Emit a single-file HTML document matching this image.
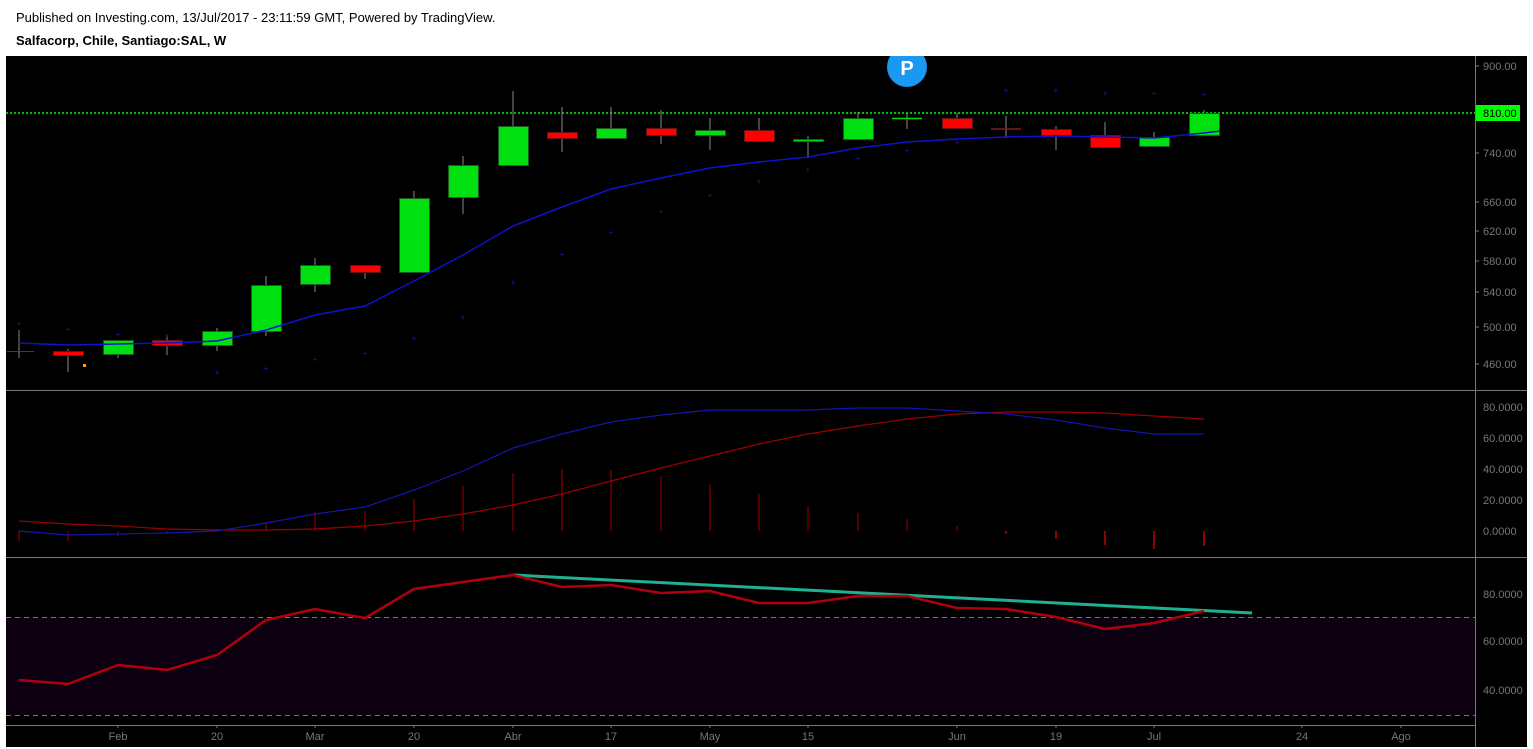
<!DOCTYPE html>
<html><head><meta charset="utf-8"><style>
html,body{margin:0;padding:0;background:#fff;width:1533px;height:749px;overflow:hidden;font-family:"Liberation Sans",Arial,sans-serif}
.h1{position:absolute;left:16px;top:10px;font-size:13px;color:#000}
.h2{position:absolute;left:16px;top:33px;font-size:13px;font-weight:bold;color:#000}
svg{position:absolute;left:0;top:0}
</style></head><body>
<div class="h1">Published on Investing.com, 13/Jul/2017 - 23:11:59 GMT, Powered by TradingView.</div>
<div class="h2">Salfacorp, Chile, Santiago:SAL, W</div>
<svg width="1533" height="749" font-family="Liberation Sans, Arial, sans-serif">
<defs><clipPath id="c"><rect x="6" y="56" width="1521" height="691"/></clipPath></defs>
<rect x="6" y="56" width="1521" height="691" fill="#000"/>
<rect x="6" y="617" width="1469" height="98" fill="#0d0010"/>
<g stroke="#777" stroke-width="1">
<line x1="1475.5" y1="56" x2="1475.5" y2="747"/>
<line x1="6" y1="390.5" x2="1527" y2="390.5"/>
<line x1="6" y1="557.5" x2="1527" y2="557.5"/>
<line x1="6" y1="725.5" x2="1475" y2="725.5"/>
<line x1="6" y1="617.5" x2="1475" y2="617.5" stroke-dasharray="5,4"/>
<line x1="6" y1="715.5" x2="1475" y2="715.5" stroke-dasharray="5,4"/>
</g>
<line x1="6" y1="113" x2="1475" y2="113" stroke="#00ff00" stroke-width="1.5" stroke-dasharray="2,2"/>
<g fill="#777" font-size="11">
<text x="1483" y="70">900.00</text><text x="1483" y="157">740.00</text><text x="1483" y="206">660.00</text><text x="1483" y="235">620.00</text><text x="1483" y="265">580.00</text><text x="1483" y="296">540.00</text><text x="1483" y="331">500.00</text><text x="1483" y="368">460.00</text>
<text x="1483" y="411">80.0000</text><text x="1483" y="442">60.0000</text><text x="1483" y="473">40.0000</text><text x="1483" y="504">20.0000</text><text x="1483" y="535">0.0000</text>
<text x="1483" y="598">80.0000</text><text x="1483" y="645">60.0000</text><text x="1483" y="694">40.0000</text>
</g>
<g stroke="#777"><line x1="1475" y1="66" x2="1479" y2="66"/><line x1="1475" y1="153" x2="1479" y2="153"/><line x1="1475" y1="202" x2="1479" y2="202"/><line x1="1475" y1="231" x2="1479" y2="231"/><line x1="1475" y1="261" x2="1479" y2="261"/><line x1="1475" y1="292" x2="1479" y2="292"/><line x1="1475" y1="327" x2="1479" y2="327"/><line x1="1475" y1="364" x2="1479" y2="364"/></g>
<rect x="1476" y="105" width="44" height="16" fill="#0f0"/>
<text x="1483" y="117" font-size="11" fill="#000">810.00</text>
<g fill="#777" font-size="11" text-anchor="middle">
<text x="118" y="740">Feb</text><text x="217" y="740">20</text><text x="315" y="740">Mar</text><text x="414" y="740">20</text><text x="513" y="740">Abr</text><text x="611" y="740">17</text><text x="710" y="740">May</text><text x="808" y="740">15</text><text x="957" y="740">Jun</text><text x="1056" y="740">19</text><text x="1154" y="740">Jul</text><text x="1302" y="740">24</text><text x="1401" y="740">Ago</text>
</g>
<g clip-path="url(#c)">
<circle cx="907" cy="67" r="20" fill="#1a98f2"/>
<text x="907" y="75" font-size="20" font-weight="bold" fill="#fff" text-anchor="middle">P</text>
</g>
<g stroke="#888" stroke-width="1">
<line x1="19" y1="330" x2="19" y2="358"/><line x1="68" y1="349" x2="68" y2="372"/><line x1="118" y1="355" x2="118" y2="358"/><line x1="167" y1="336" x2="167" y2="355"/><line x1="217" y1="328" x2="217" y2="351"/><line x1="266" y1="276" x2="266" y2="336"/><line x1="315" y1="258" x2="315" y2="292"/><line x1="365" y1="265" x2="365" y2="279"/><line x1="414" y1="191" x2="414" y2="272"/><line x1="463" y1="156" x2="463" y2="214"/><line x1="513" y1="91" x2="513" y2="165"/><line x1="562" y1="107" x2="562" y2="152"/><line x1="611" y1="107" x2="611" y2="138"/><line x1="661" y1="110" x2="661" y2="144"/><line x1="710" y1="118" x2="710" y2="150"/><line x1="759" y1="118" x2="759" y2="141"/><line x1="808" y1="136" x2="808" y2="158"/><line x1="858" y1="112" x2="858" y2="139"/><line x1="907" y1="113" x2="907" y2="129"/><line x1="957" y1="113" x2="957" y2="128"/><line x1="1006" y1="116" x2="1006" y2="138"/><line x1="1056" y1="126" x2="1056" y2="150"/><line x1="1105" y1="122" x2="1105" y2="148"/><line x1="1154" y1="132" x2="1154" y2="146"/><line x1="1204" y1="110" x2="1204" y2="135"/>
</g>
<line x1="7" y1="351.5" x2="34" y2="351.5" stroke="#c00"/>
<g fill="#00e010" stroke="#1a5a1a" stroke-width="1">
<rect x="103.5" y="340.5" width="30" height="14"/><rect x="202.5" y="331.5" width="30" height="14"/><rect x="251.5" y="285.5" width="30" height="46"/><rect x="300.5" y="265.5" width="30" height="19"/><rect x="399.5" y="198.5" width="30" height="74"/><rect x="448.5" y="165.5" width="30" height="32"/><rect x="498.5" y="126.5" width="30" height="39"/><rect x="596.5" y="128.5" width="30" height="10"/><rect x="695.5" y="130.5" width="30" height="5"/><rect x="793.5" y="139.5" width="30" height="2"/><rect x="843.5" y="118.5" width="30" height="21"/><rect x="1139.5" y="137.5" width="30" height="9"/><rect x="1189.5" y="113.5" width="30" height="22"/>
</g>
<line x1="892" y1="118.5" x2="922" y2="118.5" stroke="#0d0" stroke-width="1.5"/>
<g fill="#f00" stroke="#6a1010" stroke-width="1">
<rect x="53.5" y="351.5" width="30" height="4"/><rect x="152.5" y="340.5" width="30" height="5"/><rect x="350.5" y="265.5" width="30" height="7"/><rect x="547.5" y="132.5" width="30" height="6"/><rect x="646.5" y="128.5" width="30" height="7"/><rect x="744.5" y="130.5" width="30" height="11"/><rect x="942.5" y="118.5" width="30" height="10"/><rect x="1041.5" y="129.5" width="30" height="6"/><rect x="1090.5" y="135.5" width="30" height="12"/>
</g>
<line x1="991" y1="129" x2="1021" y2="129" stroke="#7a2020" stroke-width="1.5"/>
<rect x="83" y="364" width="3" height="3" fill="#f90"/>
<polyline fill="none" stroke="#1010d0" stroke-width="1.5" points="19,343 68,345 167,343 217,341 266,330 315,315 365,306 414,281 463,255 513,226 562,207 611,189 661,178 710,168 759,162 808,157 858,148 907,142 957,139 1006,137 1056,136 1105,137 1154,138 1204,133 1220,131"/>
<g fill="#1818c0" font-size="8" text-anchor="middle">
<text x="19" y="326">+</text><text x="68" y="332">+</text><text x="118" y="337">+</text><text x="167" y="338">+</text><text x="217" y="375">+</text><text x="266" y="371">+</text><text x="315" y="362">+</text><text x="365" y="356">+</text><text x="414" y="341">+</text><text x="463" y="320">+</text><text x="513" y="285">+</text><text x="562" y="257">+</text><text x="611" y="235">+</text><text x="661" y="214">+</text><text x="710" y="198">+</text><text x="759" y="184">+</text><text x="808" y="172">+</text><text x="858" y="161">+</text><text x="907" y="153">+</text><text x="957" y="145">+</text><text x="1006" y="93">+</text><text x="1056" y="93">+</text><text x="1105" y="96">+</text><text x="1154" y="96">+</text><text x="1204" y="97">+</text>
</g>
<g stroke="#a00000" stroke-width="1">
<line x1="19" y1="531" x2="19" y2="541"/><line x1="68" y1="531" x2="68" y2="541"/><line x1="118" y1="531" x2="118" y2="536"/><line x1="167" y1="531" x2="167" y2="534"/><line x1="217" y1="531" x2="217" y2="529"/><line x1="266" y1="531" x2="266" y2="522"/><line x1="315" y1="531" x2="315" y2="512"/><line x1="365" y1="531" x2="365" y2="511"/><line x1="414" y1="531" x2="414" y2="499"/><line x1="463" y1="531" x2="463" y2="486"/><line x1="513" y1="531" x2="513" y2="473"/><line x1="562" y1="531" x2="562" y2="469"/><line x1="611" y1="531" x2="611" y2="470"/><line x1="661" y1="531" x2="661" y2="476"/><line x1="710" y1="531" x2="710" y2="484"/><line x1="759" y1="531" x2="759" y2="494"/><line x1="808" y1="531" x2="808" y2="506"/><line x1="858" y1="531" x2="858" y2="513"/><line x1="907" y1="531" x2="907" y2="519"/><line x1="957" y1="531" x2="957" y2="526"/>
</g>
<g stroke="#e00000" stroke-width="1.3"><line x1="1006" y1="531" x2="1006" y2="534"/><line x1="1056" y1="531" x2="1056" y2="539"/><line x1="1105" y1="531" x2="1105" y2="545"/><line x1="1154" y1="531" x2="1154" y2="549"/><line x1="1204" y1="531" x2="1204" y2="546"/></g>
<polyline fill="none" stroke="#9a0000" stroke-width="1.2" points="19,521 68,524 118,526 167,529 217,530 266,530 315,529 365,526 414,521 463,514 513,505 562,494 611,481 661,468 710,456 759,444 808,434 858,426 907,419 957,414 1006,412 1056,412 1105,413 1154,416 1204,419"/>
<polyline fill="none" stroke="#1414b0" stroke-width="1.2" points="19,531 68,535 167,533 217,531 266,523 315,514 365,507 414,490 463,471 513,448 562,434 611,422 661,415 710,410 759,410 808,410 858,408 907,408 957,411 1006,414 1056,420 1105,428 1154,434 1204,434"/>
<line x1="513" y1="575" x2="1252" y2="613" stroke="#20b090" stroke-width="3"/>
<polyline fill="none" stroke="#b00010" stroke-width="2.5" points="19,680 68,684 118,665 167,670 217,655 266,620 315,609 365,618 414,589 463,582 513,575 562,587 611,585 661,593 710,591 759,603 808,603 858,596 907,596 957,608 1006,609 1056,617 1105,629 1154,623 1204,611"/>
<g stroke="#777"><line x1="118" y1="725" x2="118" y2="728"/><line x1="217" y1="725" x2="217" y2="728"/><line x1="315" y1="725" x2="315" y2="728"/><line x1="414" y1="725" x2="414" y2="728"/><line x1="513" y1="725" x2="513" y2="728"/><line x1="611" y1="725" x2="611" y2="728"/><line x1="710" y1="725" x2="710" y2="728"/><line x1="808" y1="725" x2="808" y2="728"/><line x1="957" y1="725" x2="957" y2="728"/><line x1="1056" y1="725" x2="1056" y2="728"/><line x1="1154" y1="725" x2="1154" y2="728"/><line x1="1302" y1="725" x2="1302" y2="728"/><line x1="1401" y1="725" x2="1401" y2="728"/></g>
</svg>
</body></html>
